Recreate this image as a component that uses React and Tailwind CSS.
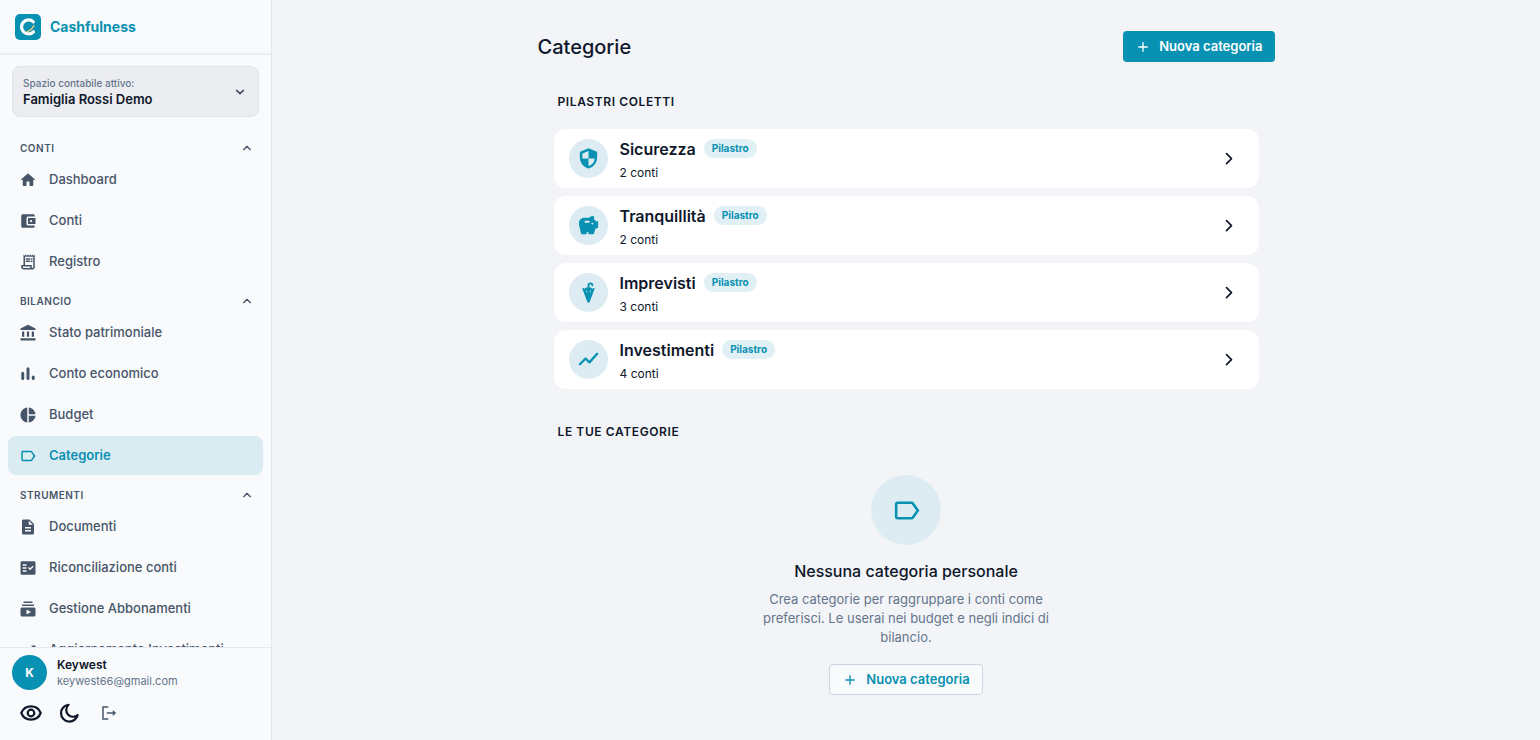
import {
  MdAccountBalance,
  MdAccountBalanceWallet,
  MdAdd,
  MdDescription,
  MdFactCheck,
  MdOutlineLabel,
  MdOutlineReceiptLong,
  MdPieChart,
  MdSavings,
  MdSubscriptions,
  MdTrendingUp,
} from 'react-icons/md';

const svg = { viewBox: '0 0 24 24', fill: 'none', stroke: 'currentColor', strokeLinecap: 'round', strokeLinejoin: 'round', 'aria-hidden': true };

function Chevron({ d, className, width = 2 }) {
  return <svg {...svg} strokeWidth={width} className={className}><path d={d} /></svg>;
}

const DOWN = 'M7 9.5l5 5 5-5';
const UP = 'M7 14.5l5-5 5 5';
const RIGHT = 'M9 5.5l6 6-6 6';

function HomeIcon({ className }) {
  return (
    <svg viewBox="0 0 24 24" fill="currentColor" aria-hidden="true" className={className}>
      <path d="M10 19v-5h4v5c0 .55.45 1 1 1h3c.55 0 1-.45 1-1v-7h1.7c.46 0 .68-.57.33-.87L12.67 3.6c-.38-.34-.96-.34-1.34 0l-8.36 7.53c-.34.3-.13.87.33.87H5v7c0 .55.45 1 1 1h3c.55 0 1-.45 1-1z" />
    </svg>
  );
}

function BarsIcon({ className }) {
  return (
    <svg {...svg} strokeWidth="4" className={className}><path d="M5 11v7M12 5v13M19 16v2" /></svg>
  );
}

function LineIcon({ className }) {
  return (
    <svg {...svg} strokeWidth="2.4" className={className}><path d="M3 17l6-6 4 4 8-9" /></svg>
  );
}

function ShieldIcon({ className }) {
  return (
    <svg {...svg} strokeWidth="2.6" className={className}>
      <path d="M12 2.8l7.7 3.2v5.5c0 4.500-3.200 8.400-7.700 9.700-4.500-1.300-7.700-5.200-7.700-9.700V6z" />
      <path fill="currentColor" stroke="none" d="M12 2.800l7.700 3.200v6H12zM12 12v9.200C7.500 19.900 4.400 16.400 4.300 12z" />
    </svg>
  );
}

function UmbrellaIcon({ className }) {
  return (
    <svg viewBox="0 0 24 24" aria-hidden="true" className={className}>
      <path fill="currentColor" d="M5.500 7.800c0-.5.600-.7 1-.4l1.200.8 2.100-1.500c.3-.2.700-.2 1 0L12 7.900l1.200-1.200c.3-.2.700-.2 1 0l2.100 1.500 1.200-.8c.4-.3 1.100-.1 1 .4l-5.300 14.200c-.4.900-2 .9-2.400 0z" />
      <path fill="none" stroke="currentColor" strokeWidth="2" strokeLinecap="round" d="M12 8V4.500a2 2 0 0 1 4 0" />
      <path fill="none" stroke="#dcecf2" strokeWidth=".6" d="M9.800 9.500l.7 3M14.200 9.500l-.7 3" />
    </svg>
  );
}

const sections = [
  {
    title: 'Conti',
    items: [
      { label: 'Dashboard', icon: HomeIcon },
      { label: 'Conti', icon: MdAccountBalanceWallet },
      { label: 'Registro', icon: MdOutlineReceiptLong },
    ],
  },
  {
    title: 'Bilancio',
    items: [
      { label: 'Stato patrimoniale', icon: MdAccountBalance },
      { label: 'Conto economico', icon: BarsIcon },
      { label: 'Budget', icon: MdPieChart },
      { label: 'Categorie', icon: MdOutlineLabel, active: true },
    ],
  },
  {
    title: 'Strumenti',
    items: [
      { label: 'Documenti', icon: MdDescription },
      { label: 'Riconciliazione conti', icon: MdFactCheck },
      { label: 'Gestione Abbonamenti', icon: MdSubscriptions },
      { label: 'Aggiornamento Investimenti', icon: MdTrendingUp },
    ],
  },
];

const pillars = [
  { name: 'Sicurezza', count: '2 conti', icon: ShieldIcon },
  { name: 'Tranquillità', count: '2 conti', icon: MdSavings },
  { name: 'Imprevisti', count: '3 conti', icon: UmbrellaIcon },
  { name: 'Investimenti', count: '4 conti', icon: LineIcon },
];

function Logo() {
  return (
    <svg viewBox="0 0 26 26" className="size-[26px]" aria-hidden="true">
      <rect width="26" height="26" rx="5" fill="#0891b2" />
      <path d="M18.3 7.8A7 7 0 1 0 18.5 17.8" fill="none" stroke="#fff" strokeWidth="3.2" strokeLinecap="round" />
      <path d="M12.5 17.5c2.8-.8 4.800-2.800 6.300-6" fill="none" stroke="#f2c879" strokeWidth="1.5" strokeLinecap="round" />
    </svg>
  );
}

function Sidebar() {
  return (
    <aside className="flex w-[272px] shrink-0 flex-col border-r border-[#e3e5eb] bg-[#f9fafc]">
      <div className="flex h-[55px] shrink-0 items-center gap-[9px] border-b-2 border-[#eceef2] pl-[15px]">
        <Logo />
        <span className="text-sm font-bold text-[#0891b2]">Cashfulness</span>
      </div>

      <button type="button" className="mx-3 mt-[11px] flex h-[51px] shrink-0 items-center justify-between rounded-lg border border-[#e2e4e9] bg-[#ecedf1] px-[10px] text-left">
        <span className="flex flex-col">
          <span className="text-[10px] leading-[15px] font-medium text-[#64748b]">Spazio contabile attivo:</span>
          <span className="text-[13px] leading-4 font-semibold text-[#0f172a]">Famiglia Rossi Demo</span>
        </span>
        <Chevron d={DOWN} width={2.5} className="size-4 text-[#475569]" />
      </button>

      <nav className="mt-[13px] min-h-0 flex-1 overflow-hidden px-2">
        {sections.map(section => (
          <div key={section.title}>
            <button type="button" className="flex w-full items-center justify-between pt-[10px] pr-2 pb-1 pl-3 text-[10px] leading-4 font-semibold tracking-wider text-[#475569] uppercase">
              {section.title}
              <Chevron d={UP} width={2} className="size-4" />
            </button>
            {section.items.map(({ label, icon: Icon, active }) => (
              <a
                key={label}
                href="#"
                aria-current={active ? 'page' : undefined}
                className={`mb-[2px] flex h-[39px] items-center gap-3 rounded-lg px-[11px] text-[13px] ${active ? 'bg-[#daebf2] font-semibold text-[#0891b2]' : 'font-medium text-[#475569]'}`}
              >
                <Icon className="size-[18px]" />
                {label}
              </a>
            ))}
          </div>
        ))}
      </nav>

      <div className="shrink-0 border-t border-[#e7e9ee] px-3 pt-[7px] pb-4">
        <div className="flex items-center gap-[10px]">
          <span className="flex size-[35px] items-center justify-center rounded-full bg-[#0891b2] text-xs font-bold text-white">K</span>
          <span className="flex flex-col">
            <span className="text-xs leading-4 font-semibold text-[#0f172a]">Keywest</span>
            <span className="text-[11px] leading-4 text-[#64748b]">keywest66@gmail.com</span>
          </span>
        </div>
        <div className="mt-3 flex items-center gap-4 pl-2 text-[#0f172a]">
          <button type="button" aria-label="Nascondi importi">
            <svg {...svg} strokeWidth="2.4" className="size-[22px]">
              <path d="M1.400 12C3.200 7.500 7.300 4.800 12 4.800S20.800 7.500 22.600 12C20.800 16.500 16.700 19.200 12 19.200S3.200 16.500 1.400 12z" />
              <circle cx="12" cy="12" r="3.6" />
            </svg>
          </button>
          <button type="button" aria-label="Tema scuro">
            <svg {...svg} strokeWidth="2.4" className="size-[22px]">
              <path d="M11.500 3a9.200 9.200 0 1 0 10 11.200A7.500 7.500 0 0 1 11.500 3z" />
            </svg>
          </button>
          <button type="button" aria-label="Esci" className="pl-1 text-[#475569]">
            <svg viewBox="0 0 24 24" fill="none" stroke="currentColor" strokeWidth="2" className="size-[18px]" aria-hidden="true">
              <path d="M11 4H4v16h7M9 12h9" />
              <path d="M17 8l4.500 4-4.500 4z" fill="currentColor" stroke="none" />
            </svg>
          </button>
        </div>
      </div>
    </aside>
  );
}

function PillarCard({ name, count, icon: Icon }) {
  return (
    <a href="#" className="flex h-[59px] items-center rounded-xl bg-white pr-5 pl-[15px]">
      <span className="flex size-[39px] items-center justify-center rounded-full bg-[#dcecf2] text-[#0891b2]">
        <Icon className="size-[23px]" />
      </span>
      <span className="ml-3 flex flex-1 flex-col gap-1 pt-[2px]">
        <span className="flex items-center gap-2">
          <span className="text-base leading-[22px] font-semibold text-[#0f172a]">{name}</span>
          <span className="rounded-full bg-[#e0f0f5] px-2 py-[2px] text-[10px] leading-[15px] font-bold text-[#0891b2]">Pilastro</span>
        </span>
        <span className="text-xs leading-[18px] text-[#0f172a]">{count}</span>
      </span>
      <Chevron d={RIGHT} width={2} className="size-5 text-[#0f172a]" />
    </a>
  );
}

export default function App() {
  return (
    <div className="flex h-screen bg-[#f2f4f8] font-['Inter',sans-serif]">
      <Sidebar />
      <main className="min-w-0 flex-1 overflow-auto">
        <div className="mx-auto max-w-[737px] pt-[31px]">
          <header className="flex items-center justify-between">
            <h1 className="text-xl font-medium text-[#0f172a]">Categorie</h1>
            <button type="button" className="flex h-[31px] items-center gap-2 rounded-[4px] bg-[#0891b2] px-3 text-[13px] font-semibold text-white">
              <MdAdd className="size-4" />
              Nuova categoria
            </button>
          </header>

          <div className="px-4">
            <h2 className="mt-[31px] px-1 text-xs leading-[18px] font-semibold tracking-wider text-[#0f172a] uppercase">Pilastri Coletti</h2>
            <div className="mt-[18px] flex flex-col gap-2">
              {pillars.map(pillar => <PillarCard key={pillar.name} {...pillar} />)}
            </div>

            <h2 className="mt-[34px] px-1 text-xs leading-[18px] font-semibold tracking-wider text-[#0f172a] uppercase">Le tue categorie</h2>
            <section className="mx-auto mt-[34px] flex max-w-[310px] flex-col items-center text-center">
              <span className="flex size-[70px] items-center justify-center rounded-full bg-[#dcecf2] text-[#0891b2]">
                <MdOutlineLabel className="size-[31px]" />
              </span>
              <h3 className="mt-[15px] text-base leading-[22px] font-medium text-[#0f172a]">Nessuna categoria personale</h3>
              <p className="mt-2 text-[13px] leading-[19px] text-[#64748b]">
                Crea categorie per raggruppare i conti come preferisci. Le userai nei budget e negli indici di bilancio.
              </p>
              <button type="button" className="mt-[17px] flex h-[31px] items-center gap-2 rounded-[4px] border border-[#cbd5e1] bg-[#f9fafc] px-3 text-[13px] font-semibold text-[#0891b2]">
                <MdAdd className="size-4" />
                Nuova categoria
              </button>
            </section>
          </div>
        </div>
      </main>
    </div>
  );
}
